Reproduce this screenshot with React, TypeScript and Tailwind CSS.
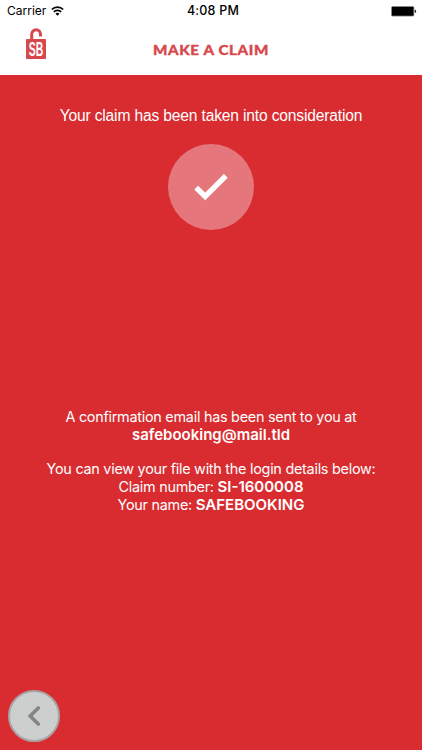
import type { ReactNode } from 'react';

function WifiIcon() {
  return (
    <svg width="13" height="10" viewBox="0 0 13 10" fill="none" stroke="#000" strokeWidth="1.7">
      <path d="M0.8 3.5a8.1 8.1 0 0 1 11.4 0" />
      <path d="M2.8 5.9a5.2 5.2 0 0 1 7.4 0" />
      <path d="M6.5 9.8L4.5 7.7a2.9 2.9 0 0 1 4 0z" fill="#000" stroke="none" />
    </svg>
  );
}

function BatteryIcon() {
  return (
    <svg width="26" height="11" viewBox="0 0 26 11">
      <rect x="0.5" y="0.5" width="22.4" height="9.6" rx="1.2" fill="#000" stroke="#8a8a8a" strokeWidth="0.8" />
      <path d="M23.7 3.8h0.6q0.8 0 0.8 1.5t-0.8 1.5h-0.6z" fill="#222" />
    </svg>
  );
}

function StatusBar() {
  return (
    <div className="grid h-[22px] grid-cols-3 items-center font-['Inter','Noto_Sans',sans-serif] text-black">
      <div className="flex items-center gap-[5px] pl-[7px] text-[12px]">
        <span>Carrier</span>
        <WifiIcon />
      </div>
      <span className="pl-[4px] text-center text-[12.5px] font-medium tracking-[0.2px]">4:08 PM</span>
      <div className="flex justify-end pr-[5px]">
        <BatteryIcon />
      </div>
    </div>
  );
}

function Logo() {
  return (
    <svg width="20" height="36" viewBox="0 0 20 36" className="overflow-visible">
      <path d="M5.7 12V6.2a4.4 4.4 0 0 1 8.8 0v2.2" fill="none" stroke="#d8474b" strokeWidth="3" />
      <rect x="0" y="11" width="20" height="20" rx="1" fill="#d8474b" />
      <text
        x="10"
        y="28"
        textAnchor="middle"
        textLength="14.5"
        lengthAdjust="spacingAndGlyphs"
        fill="#fff"
        fontSize="20"
        fontWeight="700"
        fontFamily="'Liberation Sans Narrow', 'Liberation Sans', sans-serif"
      >
        SB
      </text>
    </svg>
  );
}

function Header() {
  return (
    <header className="h-[75px] bg-white">
      <StatusBar />
      <div className="grid h-[53px] grid-cols-[120px_1fr_120px] items-start">
        <div className="pl-[26px] pt-[6px]">
          <Logo />
        </div>
        <h1 className="scale-x-[1.08] whitespace-nowrap pt-[19px] text-center font-['Lato',sans-serif] text-[14px] leading-[18px] font-black tracking-[0.6px] text-[#d8474b] [-webkit-text-stroke:0.35px_#d8474b]">
          MAKE A CLAIM
        </h1>
      </div>
    </header>
  );
}

function Line({ children }: { children: ReactNode }) {
  return <p className="whitespace-nowrap">{children}</p>;
}

function Strong({ children }: { children: ReactNode }) {
  return <span className="text-[15px] font-semibold tracking-normal">{children}</span>;
}

export default function App() {
  return (
    <div className="flex h-[750px] w-[422px] flex-col bg-[#d82c31]">
      <Header />

      <main className="flex flex-1 flex-col items-center text-white">
        <p className="mt-[32px] font-['Liberation_Sans',sans-serif] text-[15.6px] leading-[18px] tracking-[-0.16px]">
          Your claim has been taken into consideration
        </p>

        <div className="mt-[19px] flex h-[86px] w-[86px] items-center justify-center rounded-full bg-[#e5777c]">
          <svg width="34" height="28" viewBox="0 0 34 28" fill="none" stroke="#fff" strokeWidth="5.4">
            <path d="M2.2 14.6L11.2 23.4L31.8 2.8" />
          </svg>
        </div>

        <div className="mt-[178px] text-center font-['Inter','Noto_Sans',sans-serif] text-[14.4px] leading-[17.7px] tracking-[-0.26px]">
          <Line>A confirmation email has been sent to you at</Line>
          <Line>
            <Strong>safebooking@mail.tld</Strong>
          </Line>
          <div className="mt-[17px]">
            <Line>You can view your file with the login details below:</Line>
            <Line>
              Claim number: <Strong>SI-1600008</Strong>
            </Line>
            <Line>
              Your name: <Strong>SAFEBOOKING</Strong>
            </Line>
          </div>
        </div>
      </main>

      <footer className="pb-2 pl-2">
        <button
          aria-label="Back"
          className="flex h-[52px] w-[52px] items-center justify-center rounded-full border-2 border-[#a9a3a3] bg-[#cdcfce]"
        >
          <svg width="14" height="20" viewBox="0 0 14 20" fill="none" stroke="#858585" strokeWidth="3.6" strokeLinecap="round">
            <path d="M11.3 1.9L3.2 10L11.3 18.1" />
          </svg>
        </button>
      </footer>
    </div>
  );
}
